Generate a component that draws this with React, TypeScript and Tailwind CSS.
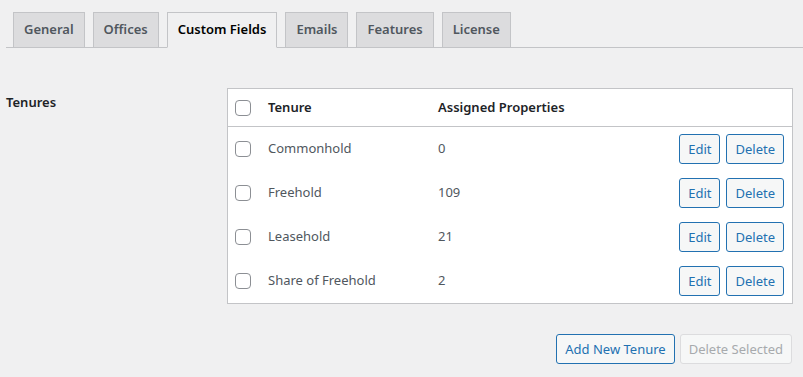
const tabs = ["General", "Offices", "Custom Fields", "Emails", "Features", "License"];

const tenures = [
  { name: "Commonhold", count: 0 },
  { name: "Freehold", count: 109 },
  { name: "Leasehold", count: 21 },
  { name: "Share of Freehold", count: 2 },
];

function Checkbox() {
  return (
    <span className="block w-4 h-4 bg-white border border-[#8c8f94] rounded-[4px] shrink-0" />
  );
}

function Button({ children, className = "" }: { children: React.ReactNode; className?: string }) {
  return (
    <button
      className={`h-[30px] px-[8px] border border-[#2271b1] text-[#2271b1] bg-[#f6f7f7] rounded-[3px] text-[13px] leading-none ${className}`}
    >
      {children}
    </button>
  );
}

export default function App() {
  return (
    <div
      className="w-[803px] h-[377px] bg-[#f0f0f1] text-[#3c434a] overflow-hidden"
      style={{ fontFamily: '"Noto Sans", "Open Sans", sans-serif' }}
    >
      {/* Tabs */}
      <div className="ml-[6px] pt-[12px] pl-[7px] flex gap-[8px] border-b border-[#c3c4c7] h-[48px] items-end">
        {tabs.map((t) => {
          const active = t === "Custom Fields";
          return (
            <div
              key={t}
              className={`h-[36px] -mb-px px-[10px] flex items-center border border-[#c3c4c7] text-[13px] font-semibold ${
                active
                  ? "bg-[#f0f0f1] border-b-[#f0f0f1] text-black"
                  : "bg-[#dcdcde] text-[#50575e]"
              }`}
            >
              {t}
            </div>
          );
        })}
      </div>

      {/* Form row */}
      <div className="flex pl-[6px] pt-[40px]">
        <div className="w-[221px] pt-[5px] text-[13px] font-semibold text-[#1d2327]">Tenures</div>
        <div className="w-[566px]">
          <div className="bg-white border border-[#c3c4c7]">
            <div className="h-[38px] flex items-center border-b border-[#c3c4c7] text-[13px] font-semibold text-[#1d2327]">
              <div className="w-[40px] pl-[7px]">
                <Checkbox />
              </div>
              <div className="w-[170px]">Tenure</div>
              <div>Assigned Properties</div>
            </div>
            {tenures.map((r) => (
              <div key={r.name} className="h-[44px] flex items-center text-[13px] text-[#50575e]">
                <div className="w-[40px] pl-[7px]">
                  <Checkbox />
                </div>
                <div className="w-[170px]">{r.name}</div>
                <div className="flex-1">{r.count}</div>
                <div className="flex gap-[6px] pr-[8px]">
                  <Button>Edit</Button>
                  <Button>Delete</Button>
                </div>
              </div>
            ))}
          </div>
          <div className="flex justify-end gap-[5px] mt-[30px] mr-[1px]">
            <Button>Add New Tenure</Button>
            <button className="h-[30px] px-[8px] border border-[#dcdcde] text-[#a7aaad] bg-[#f6f7f7] rounded-[3px] text-[13px] leading-none">
              Delete Selected
            </button>
          </div>
        </div>
      </div>
    </div>
  );
}
